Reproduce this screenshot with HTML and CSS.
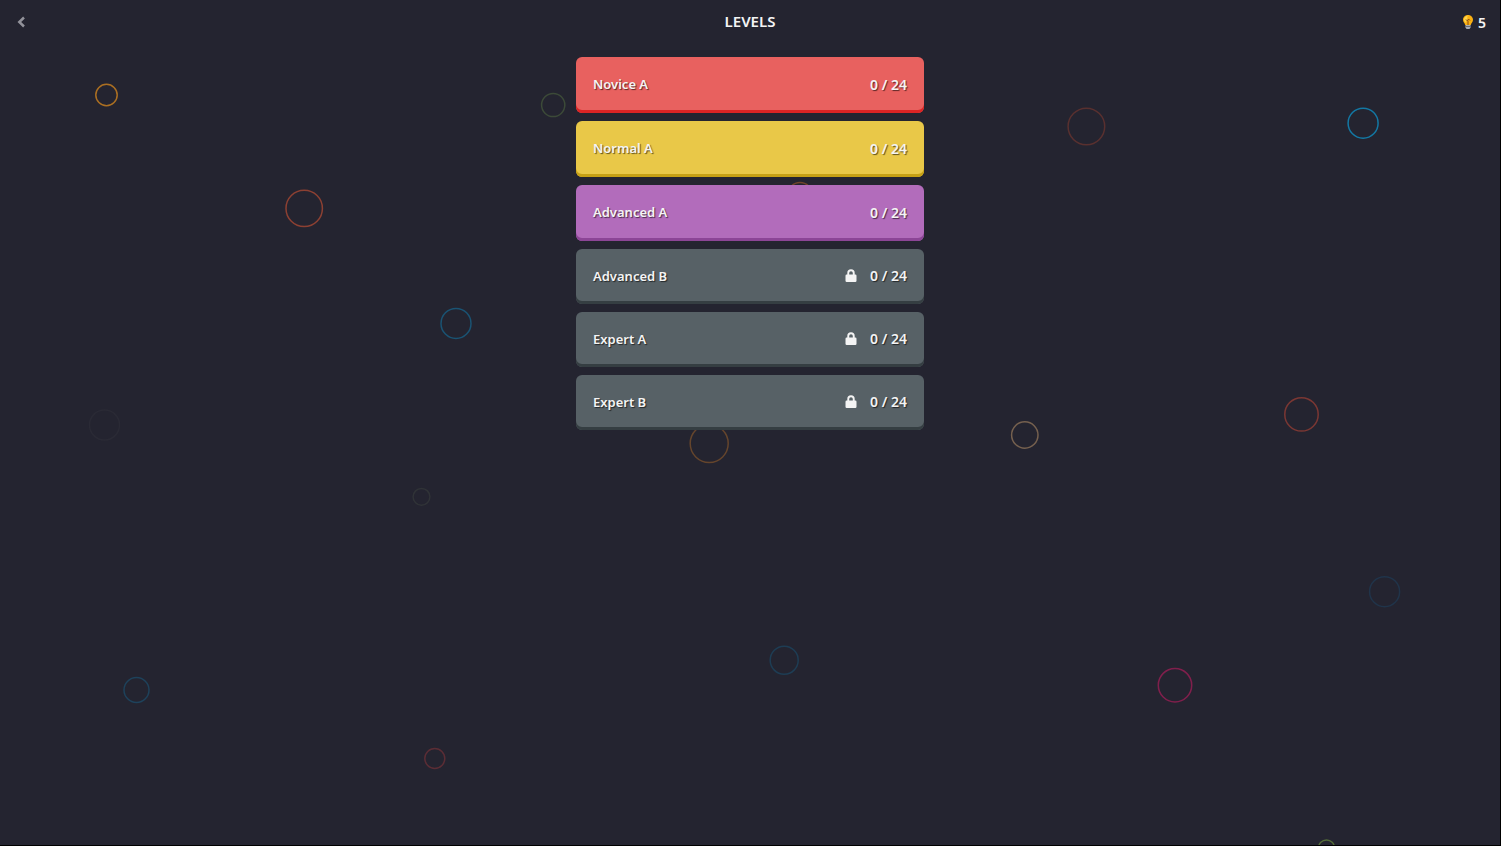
FILE: index.html
```html
<!DOCTYPE html>
<html lang="en">
<head>
    <meta charset="UTF-8">
    <title>Levels</title>
    <link rel="stylesheet" href="styles.css">
</head>

<body>
    <!-- Floating background circles -->
    <svg class="bubbles" aria-hidden="true">
        <circle cx="106.5" cy="95" r="10.7" stroke="#ab6f22"/>
        <circle cx="553.2" cy="105" r="11.6" stroke="#3c4a38"/>
        <circle cx="304.2" cy="208.4" r="18.2" stroke="#8c4032"/>
        <circle cx="800" cy="194.500" r="12" stroke="#70452b"/>
        <circle cx="1086.4" cy="126.5" r="18.3" stroke="#59302f"/>
        <circle cx="1363.1" cy="123.2" r="15" stroke="#1378a4"/>
        <circle cx="456" cy="323.4" r="15" stroke="#1a5373"/>
        <circle cx="104.500" cy="425" r="15" stroke="#2a2a35"/>
        <circle cx="421.5" cy="496.8" r="8.4" stroke="#303337"/>
        <circle cx="709.2" cy="443.5" r="19" stroke="#65452c"/>
        <circle cx="1024.8" cy="435" r="13.2" stroke="#76614f"/>
        <circle cx="1301.5" cy="414.4" r="16.7" stroke="#7b3733"/>
        <circle cx="1384.6" cy="591.7" r="15" stroke="#20344a"/>
        <circle cx="784.2" cy="660.2" r="14" stroke="#1e3d54"/>
        <circle cx="1175" cy="685.2" r="16.700" stroke="#801f4c"/>
        <circle cx="136.5" cy="690" r="12.5" stroke="#1e425b"/>
        <circle cx="434.8" cy="758.5" r="10" stroke="#5b2d35"/>
        <circle cx="1326.5" cy="848" r="8" stroke="#536b38"/>
    </svg>

    <header class="topbar">
        <button class="back" type="button" aria-label="Back">
            <svg width="10" height="12" viewBox="0 0 10 12"><path d="M8 1.500 3.300 6 8 10.500"/></svg>
        </button>
        <h1>LEVELS</h1>
        <div class="hints">
            <svg width="12" height="16" viewBox="0 0 12 16" aria-hidden="true">
                <path fill="#fbb112" d="M6 1C3 1 1 3.200 1 5.800c0 2.200 1.700 3.200 2.200 5.200h5.600C9.300 9 11 8 11 5.800 11 3.200 9 1 6 1z"/>
                <path fill="#ffd54a" d="M5.500 1.800C3.400 2 2 3.700 2 5.600c0 1.300.7 2.200 1.400 3.200L5.200 6z"/>
                <path fill="none" stroke="#8a4b14" d="M4 5.500 5.500 7l1-2L8 6.500M6 7v4"/>
                <path fill="#a9adb5" d="M3.500 11h5v2.500l-1 1.500h-3l-1-1.500z"/>
                <path fill="none" stroke="#666b75" d="M3.500 12.500h5"/>
            </svg>
            <span>5</span>
        </div>
    </header>

    <main class="levels">
        <button class="level novice" type="button">
            <span class="name">Novice A</span>
            <span>0 / 24</span>
        </button>
        <button class="level normal" type="button">
            <span class="name">Normal A</span>
            <span>0 / 24</span>
        </button>
        <button class="level advanced" type="button">
            <span class="name">Advanced A</span>
            <span>0 / 24</span>
        </button>
        <button class="level locked" type="button">
            <span class="name">Advanced B</span>
            <svg class="lock" viewBox="0 0 12 14"><path d="M2.300 5.500V4a3.700 3.700 0 0 1 7.400 0v1.500h.6a1.200 1.200 0 0 1 1.200 1.200v5a1.200 1.200 0 0 1-1.200 1.200H1.700a1.200 1.200 0 0 1-1.200-1.200v-5a1.200 1.200 0 0 1 1.200-1.200zm1.900 0h3.600V4a1.800 1.800 0 0 0-3.600 0z"/></svg>
            <span>0 / 24</span>
        </button>
        <button class="level locked" type="button">
            <span class="name">Expert A</span>
            <svg class="lock" viewBox="0 0 12 14"><path d="M2.300 5.500V4a3.700 3.700 0 0 1 7.400 0v1.500h.6a1.200 1.200 0 0 1 1.200 1.200v5a1.200 1.200 0 0 1-1.200 1.200H1.700a1.200 1.200 0 0 1-1.200-1.200v-5a1.200 1.200 0 0 1 1.200-1.200zm1.900 0h3.600V4a1.800 1.800 0 0 0-3.600 0z"/></svg>
            <span>0 / 24</span>
        </button>
        <button class="level locked" type="button">
            <span class="name">Expert B</span>
            <svg class="lock" viewBox="0 0 12 14"><path d="M2.300 5.500V4a3.700 3.700 0 0 1 7.400 0v1.500h.6a1.200 1.200 0 0 1 1.200 1.200v5a1.200 1.200 0 0 1-1.200 1.200H1.700a1.200 1.200 0 0 1-1.200-1.200v-5a1.200 1.200 0 0 1 1.200-1.200zm1.900 0h3.600V4a1.800 1.800 0 0 0-3.600 0z"/></svg>
            <span>0 / 24</span>
        </button>
    </main>
</body>
</html>
```

FILE: styles.css
```css
* {
    box-sizing: border-box;
}

body {
    margin: 0;
    min-height: 100vh;
    border-right: 1px solid #000;
    border-bottom: 1px solid #000;
    background-color: #242430;
    color: #f4f4f4;
    font-family: "Noto Sans", "Open Sans", sans-serif;
    font-size: 14px;
    font-weight: 600;
}

.bubbles {
    position: absolute;
    top: 0;
    left: 0;
    width: calc(100% - 1px);
    height: calc(100% - 1px);
    z-index: -1;
    fill: none;
    stroke-width: 1.5;
}

.topbar {
    display: grid;
    grid-template-columns: 1fr auto 1fr;
    align-items: center;
    height: 44px;
    padding: 0 14px;
}

.topbar h1 {
    margin: 0;
    padding-bottom: 2px;
    font-size: 15px;
    font-weight: 600;
}

.back {
    display: flex;
    justify-self: start;
    padding: 2px;
    border: none;
    background: none;
    cursor: pointer;
}

.back path {
    fill: none;
    stroke: #92929a;
    stroke-width: 2.5;
}

.hints {
    display: flex;
    justify-self: end;
    align-items: center;
    gap: 4px;
}

.levels {
    display: flex;
    flex-direction: column;
    gap: 8px;
    max-width: 348px;
    margin: 0 auto;
    padding: 13px 0;
}

.level {
    display: flex;
    align-items: center;
    gap: 13px;
    height: 56px;
    padding: 0 17px 2px;
    border: none;
    border-radius: 6px;
    color: #f4f4f4;
    font: inherit;
    text-shadow: 1px 1px 1px rgba(0, 0, 0, 0.6);
    cursor: pointer;
}

.level .name {
    flex: 1;
    font-size: 13px;
    text-align: left;
}

.novice {
    background-color: #e8615f;
    box-shadow: inset 0 -3px #dc2424;
}

.normal {
    background-color: #e9c848;
    box-shadow: inset 0 -3px #c6a015;
}

.advanced {
    background-color: #b26cbb;
    box-shadow: inset 0 -3px #8c4596;
}

.locked {
    height: 55px;
    background-color: #576166;
    box-shadow: inset 0 -3px #353e42;
}

.lock {
    width: 12px;
    height: 14px;
    fill: #f4f4f4;
}
```
